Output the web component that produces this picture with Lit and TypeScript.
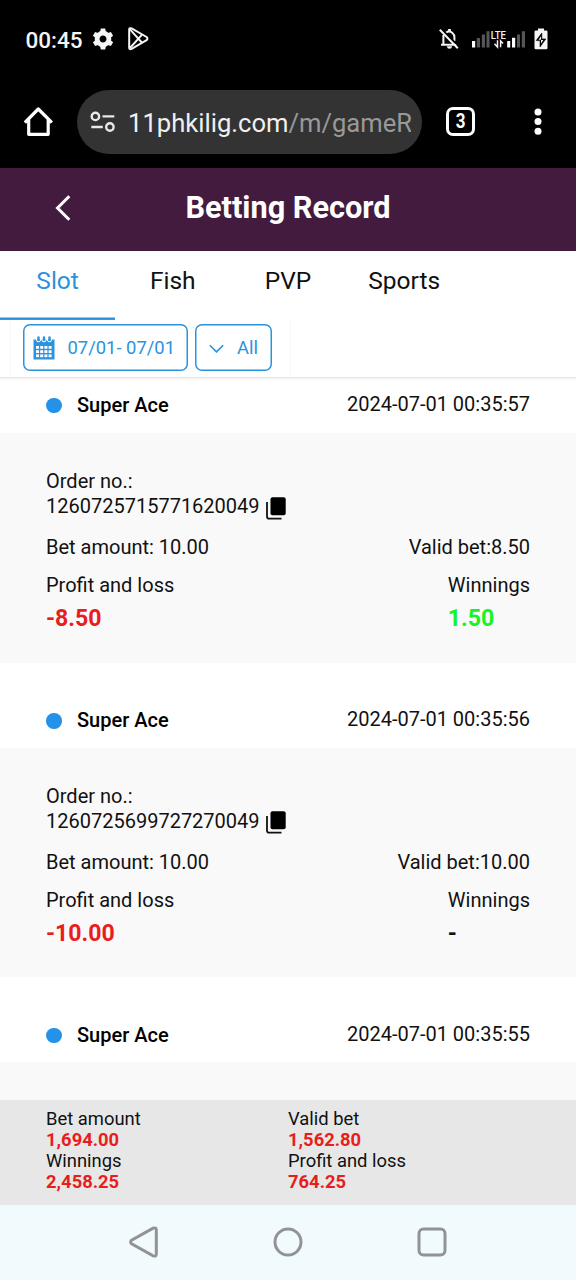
import { LitElement, html, css, svg } from "lit";
import { customElement, property } from "lit/decorators.js";

interface Bet {
  game: string;
  time: string;
  order: string;
  amount: string;
  valid: string;
  profit: string;
  winnings: string;
}

const BETS: Bet[] = [
  { game: "Super Ace", time: "2024-07-01 00:35:57", order: "1260725715771620049", amount: "10.00", valid: "8.50", profit: "-8.50", winnings: "1.50" },
  { game: "Super Ace", time: "2024-07-01 00:35:56", order: "1260725699727270049", amount: "10.00", valid: "10.00", profit: "-10.00", winnings: "-" },
];

const TOTALS = [
  ["Bet amount", "1,694.00"],
  ["Valid bet", "1,562.80"],
  ["Winnings", "2,458.25"],
  ["Profit and loss", "764.25"],
];

@customElement("status-bar")
class StatusBar extends LitElement {
  static styles = css`
    :host { display: flex; height: 78px; align-items: center; background: #000; color: #f5f5f5; padding: 0 28px 0 25.5px; box-sizing: border-box; }
    svg { display: block; flex: none; }
    .time { font: 500 22.5px/28px Roboto, sans-serif; width: 66.5px; padding-top: 1px; white-space: nowrap; }
    .gear { margin-right: 12.5px; }
    .space { flex: 1; }
    .bell { margin-right: 13px; }
    .signal { margin-right: 8px; }
    .lte { font: 500 10.6px Roboto, sans-serif; fill: #f5f5f5; }
  `;
  render() {
    const teeth = [0, 60, 120, 180, 240, 300];
    return html`
      <div class="time">00:45</div>
      <svg class="gear" width="22" height="22" viewBox="-11 -11 22 22">
        <circle r="5.9" fill="none" stroke="#f5f5f5" stroke-width="4.8" />
        ${teeth.map((a) => svg`<path d="M-3 -6.5L-2.2 -10.4H2.2L3 -6.5Z" fill="#f5f5f5" transform="rotate(${a})" />`)}
      </svg>
      <svg width="24" height="26" viewBox="0 0 24 26" fill="none" stroke="#f5f5f5" stroke-width="2" stroke-linejoin="round">
        <path d="M2.2 3.2Q2.6 1.6 4.6 2.4L19.6 11Q21.3 12.6 19.6 14.2L4.6 22.9Q2.6 23.7 2.2 22Z" />
        <path d="M3 3.4L14.8 16.5M3 22L14.8 8.8" stroke-width="1.9" />
      </svg>
      <div class="space"></div>
      <svg class="bell" width="20" height="22" viewBox="0 0 20 22" fill="none" stroke="#f5f5f5">
        <path d="M4.4 7V16.3M2 16.7H17.5M7 4.7Q10 2.5 13.2 4.7Q15.7 6.8 15.4 9.5V13" stroke-width="2" />
        <path d="M10.5 1V4" stroke-width="2.8" />
        <path d="M7.8 18.3H13.2Q12.8 20.8 10.5 20.8Q8.2 20.8 7.8 18.3Z" fill="#f5f5f5" stroke="none" />
        <path d="M2.4 .7L20.2 18.5" stroke="#000" stroke-width="1.6" />
        <path d="M.8 1.8L18.8 20.2" stroke-width="2" />
      </svg>
      <svg class="signal" width="54" height="20" viewBox="0 0 54 20">
        <path d="M0 12H3.2V18.5H0Z M35.2 12H38.2V18.5H35.2Z M40 8.7H43.2V18.5H40Z" fill="#fff" />
        <path d="M4.8 9H8V18.5H4.8Z M9.8 5.5H13V18.5H9.8Z M14.5 2.2H17.5V18.5H14.5Z M45 5.5H48V18.5H45Z M49.8 2.2H53V18.5H49.8Z" fill="#555" />
        <text class="lte" x="18.8" y="10.4" textLength="15.2" lengthAdjust="spacingAndGlyphs">LTE</text>
        <path d="M25.5 11.2V18L22.5 14.8M28.6 18.2V11.8L31 14.4" fill="none" stroke="#f5f5f5" stroke-width="1.5" />
      </svg>
      <svg width="14" height="22" viewBox="0 0 14 22">
        <path d="M4 .5H10V2.5H12.2Q13.5 2.5 13.5 3.8V20Q13.5 21.3 12.2 21.3H1.8Q.5 21.3 .5 20V3.8Q.5 2.5 1.8 2.5H4Z" fill="#f5f5f5" />
        <path d="M7.8 5L2.2 12.6H6V19L11.8 10.9H7.8Z" fill="#000" stroke="#000" stroke-width=".6" />
        <path d="M7 8.2L4.6 11.8H7V15.5L9.3 11.9H7Z" fill="#f5f5f5" />
      </svg>
    `;
  }
}

@customElement("browser-bar")
class BrowserBar extends LitElement {
  static styles = css`
    :host { display: flex; height: 90px; align-items: flex-start; background: #000; padding: 12px 34.5px 0 23px; box-sizing: border-box; font-family: Roboto, sans-serif; }
    svg { display: block; flex: none; }
    .home { margin: 16px 23px 0 0; }
    .pill { display: flex; align-items: center; width: 345px; height: 64px; border-radius: 32px; background: #333; box-sizing: border-box; padding: 0 11px 0 13px; }
    .url { margin-left: 12px; flex: 1; min-width: 0; overflow: hidden; white-space: nowrap; font-size: 25.6px; line-height: 34px; color: #f0f0f0; padding-top: 1px; }
    .path { color: #999; }
    .count { display: flex; justify-content: center; box-sizing: border-box; width: 29px; height: 29px; margin: 17px 0 0 24px; border: 3px solid #fff; border-radius: 7px; color: #fff; font-size: 20px; font-weight: 700; line-height: 23px; }
    .count span { transform: scaleX(.85); }
    .menu { margin: 18px 0 0 auto; }
  `;
  render() {
    return html`
      <svg class="home" width="31" height="31" viewBox="0 0 31 31" fill="none" stroke="#fff" stroke-width="3.2" stroke-linejoin="round" stroke-linecap="square">
        <path d="M3 15.4L15.3 3L27.7 15.4M5.7 14V28.3H25.2V14" />
      </svg>
      <div class="pill">
        <svg width="26" height="22" viewBox="0 0 26 22" fill="none" stroke="#e8e8e8" stroke-width="2.4">
          <circle cx="5.4" cy="5.4" r="3.7" /><path d="M12.5 5.4H24.3M1.3 16H12.8" /><circle cx="19.9" cy="16" r="3.7" />
        </svg>
        <div class="url">11phkilig.com<span class="path">/m/gameR</span></div>
      </div>
      <div class="count"><span>3</span></div>
      <svg class="menu" width="8" height="28" viewBox="0 0 8 28" fill="#fff"><circle cx="4" cy="4" r="3.5" /><circle cx="4" cy="13.6" r="3.5" /><circle cx="4" cy="23.2" r="3.5" /></svg>
    `;
  }
}

@customElement("bet-card")
class BetCard extends LitElement {
  @property({ attribute: false }) bet!: Bet;
  static styles = css`
    :host { display: block; height: 229.5px; background: #f9f9f9; box-sizing: border-box; padding: 36px 46px 0; font-size: 20px; line-height: 25px; color: #111; }
    .order { display: flex; align-items: center; height: 25px; margin-bottom: 16px; }
    .order svg { margin: 3px 0 0 6.5px; display: block; }
    .row { display: flex; justify-content: space-between; margin-bottom: 13px; }
    .label { margin-bottom: 8px; }
    .value { font-size: 23.1px; font-weight: 700; line-height: 25px; }
    .red { color: #e91d1d; }
    .green { color: #18f326; }
  `;
  render() {
    const b = this.bet;
    return html`
      <div>Order no.:</div>
      <div class="order">${b.order}
        <svg width="20" height="23" viewBox="0 0 20 23">
          <rect x="4.5" y=".3" width="15.2" height="18" rx="2" fill="#000" />
          <path d="M1 5V19.5Q1 21.7 3 21.7H15.5" fill="none" stroke="#111" stroke-width="1.8" />
        </svg>
      </div>
      <div class="row"><span>Bet amount: ${b.amount}</span><span>Valid bet:${b.valid}</span></div>
      <div class="row">
        <div><div class="label">Profit and loss</div><div class="value red">${b.profit}</div></div>
        <div><div class="label">Winnings</div><div class="value ${b.winnings === "-" ? "" : "green"}">${b.winnings}</div></div>
      </div>
    `;
  }
}

@customElement("app-root")
class AppRoot extends LitElement {
  static styles = css`
    :host { display: flex; flex-direction: column; width: 576px; height: 1280px; overflow: hidden; background: #fff; font-family: Roboto, sans-serif; color: #111; }
    svg { display: block; flex: none; }
    .title { display: grid; grid-template-columns: 126px 1fr 126px; align-items: center; height: 83px; flex: none; background: #431b3f; color: #fff; font-size: 30.7px; font-weight: 700; text-align: center; padding-bottom: 4px; box-sizing: border-box; white-space: nowrap; }
    .title svg { justify-self: center; }
    .tabs { display: flex; height: 69px; flex: none; font-size: 24.5px; line-height: 30px; }
    .tab { width: 115.2px; box-sizing: border-box; padding-top: 15px; text-align: center; white-space: nowrap; }
    .tab:last-child { padding-left: 2px; }
    .on { color: #2b93de; box-shadow: inset 0 -2.4px #2b93de; }
    .filters { height: 58px; flex: none; box-sizing: border-box; padding: 0 11px 0 10px; border-bottom: 1px solid #e6e6e6; box-shadow: 0 1px 2px #eee; }
    .group { display: flex; width: 281px; height: 57px; gap: 7px; box-sizing: border-box; padding: 4px 12px 0; border: solid #f8f8f8; border-width: 0 1px; }
    .chip { display: flex; align-items: center; height: 47px; box-sizing: border-box; box-shadow: inset 0 0 0 1.5px #2b93de; border-radius: 7px; color: #2b93de; font-size: 18.4px; white-space: nowrap; }
    .date { width: 165px; padding-left: 10px; gap: 12.5px; }
    .all { width: 77px; padding-left: 14px; gap: 13px; }
    .list { flex: 1; min-height: 0; overflow: hidden; }
    .head { display: flex; align-items: center; height: 85px; box-sizing: border-box; padding: 30px 46px 0; font-size: 20px; line-height: 26px; }
    .first { height: 55px; padding-top: 0; padding-bottom: 2px; }
    .dot { width: 15.5px; height: 15.5px; border-radius: 50%; background: #2492e8; margin: 2px 15.5px 0 0; }
    .game { font-weight: 500; flex: 1; color: #000; }
    .when { margin-top: -2px; }
    .rest { height: 60px; background: #f9f9f9; }
    .totals { display: grid; grid-template-columns: 242px 1fr; align-content: start; height: 105px; flex: none; box-sizing: border-box; padding: 7.5px 46px 0; background: #e7e7e7; font-size: 18.4px; line-height: 21.3px; }
    .totals b { display: block; color: #e91d1d; font-weight: 700; }
    .nav { display: flex; justify-content: center; align-items: center; gap: 112px; height: 75px; flex: none; background: #f1fbfd; box-sizing: border-box; padding-bottom: 1px; }
  `;

  head(game: string, time: string, first = false) {
    return html`<div class="head ${first ? "first" : ""}"><span class="dot"></span><span class="game">${game}</span><span class="when">${time}</span></div>`;
  }

  render() {
    return html`
      <status-bar></status-bar>
      <browser-bar></browser-bar>
      <div class="title">
        <svg width="18" height="26" viewBox="0 0 18 26" fill="none" stroke="#fff" stroke-width="3"><path d="M15.3 1.3L3.5 13L15.3 24.7" /></svg>
        <span>Betting Record</span>
      </div>
      <div class="tabs">
        ${["Slot", "Fish", "PVP", "Sports"].map((t, i) => html`<div class="tab ${i === 0 ? "on" : ""}">${t}</div>`)}
      </div>
      <div class="filters"><div class="group">
        <div class="chip date">
          <svg width="22" height="24" viewBox="0 0 22 24">
            <path d="M.5 3.5H21.5V23.5H.5Z" fill="#2b93de" />
            ${[5.5, 11, 16.5].map((x) => svg`<path d="M${x - 2} 2.5V4.2Q${x} 7.4 ${x + 2} 4.2V2.5" fill="none" stroke="#fff" stroke-width="1.1" /><rect x="${x - 1.2}" y=".3" width="2.4" height="4.8" rx="1.2" fill="#2b93de" />`)}
            ${[10, 14.2, 18.4].map((y) => [3, 7.2, 11.4, 15.6].map((x) => svg`<rect x="${x}" y="${y}" width="3" height="2.8" fill="#fff" />`))}
          </svg>
          <span>07/01- 07/01</span>
        </div>
        <div class="chip all">
          <svg width="15" height="10" viewBox="0 0 15 10" fill="none" stroke="#2b93de" stroke-width="1.6"><path d="M.8 2.3L7.5 8.9L14.2 2.3" /></svg>
          <span>All</span>
        </div>
      </div></div>
      <div class="list">
        ${BETS.map((b, i) => html`${this.head(b.game, b.time, i === 0)}<bet-card .bet=${b}></bet-card>`)}
        ${this.head("Super Ace", "2024-07-01 00:35:55")}
        <div class="rest"></div>
      </div>
      <div class="totals">
        ${TOTALS.map(([k, v]) => html`<div>${k}<b>${v}</b></div>`)}
      </div>
      <div class="nav">
        <svg width="32" height="34" viewBox="0 0 32 34" fill="none" stroke="#929297" stroke-width="3"><path d="M25.2 3.1L3.6 15.1Q1.6 17 3.6 18.9L25.2 30.9Q28.3 31.8 28.3 29V5Q28.3 2.2 25.2 3.1Z" /></svg>
        <svg width="32" height="32" viewBox="0 0 32 32" fill="none" stroke="#929297" stroke-width="3"><circle cx="16" cy="16" r="13" /></svg>
        <svg width="32" height="32" viewBox="0 0 32 32" fill="none" stroke="#929297" stroke-width="3"><rect x="3" y="3" width="26" height="26" rx="4.5" /></svg>
      </div>
    `;
  }
}
